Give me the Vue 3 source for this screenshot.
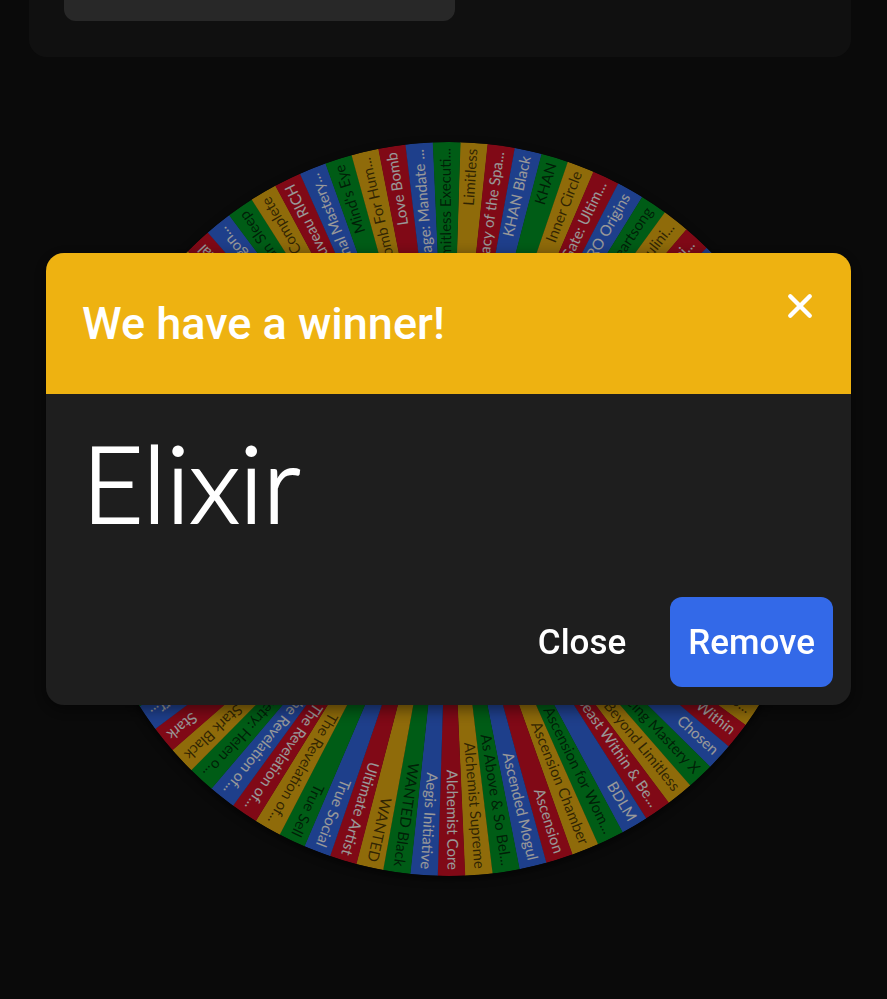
<script setup>
import { ref } from 'vue'

const open = ref(true)
const winner = ref('Elixir')

const palette = [
  { fill: '#eeb211', ink: 'dark' },
  { fill: '#d50f25', ink: 'light' },
  { fill: '#3369e8', ink: 'light' },
  { fill: '#009925', ink: 'dark' },
]

// Entry names keyed by slice number, clockwise from the top of the wheel.
const names = {
  0: 'Limitless',
  1: 'Legacy of the Spa...',
  2: 'KHAN Black',
  3: 'KHAN',
  4: 'Inner Circle',
  5: 'Gate: Ultim...',
  6: 'HERO Origins',
  7: 'Heartsong',
  8: 'Masculini...',
  9: 'Femini...',
  28: 'Co...',
  29: 'Beast Within',
  30: 'Chosen',
  31: 'Being Mastery X',
  32: 'Beyond Limitless',
  33: 'Beast Within & Be...',
  34: 'BDLM',
  35: 'Ascension for Wom...',
  36: 'Ascension Chamber',
  37: 'Ascension',
  38: 'Ascended Mogul',
  39: 'As Above & So Bel...',
  40: 'Alchemist Supreme',
  41: 'Alchemist Core',
  42: 'Aegis Initiative',
  43: 'WANTED Black',
  44: 'WANTED',
  45: 'Ultimate Artist',
  46: 'True Social',
  47: 'True Sell',
  48: 'The Revelation of...',
  49: 'The Revelation of...',
  50: 'The Revelation of...',
  51: 'Symmetry: Helen o...',
  52: 'Stark Black',
  53: 'Stark',
  54: 'Starr...',
  73: 'Primal',
  74: 'Paragon...',
  75: 'Ocean Sleep',
  76: 'Omega Complete',
  77: 'Nouveau RICH',
  78: 'Nonlethal Mastery...',
  79: "Mind's Eye",
  80: 'Love Bomb For Hum...',
  81: 'Love Bomb',
  82: 'Lineage: Mandate ...',
  83: 'Limitless Executi...',
}

const COUNT = 84
const STEP = 360 / COUNT
const OFFSET = 1.75
const R = 367

function rim(deg) {
  const a = (deg * Math.PI) / 180
  return `${(R * Math.sin(a)).toFixed(2)} ${(-R * Math.cos(a)).toFixed(2)}`
}

const slices = Array.from({ length: COUNT }, (_, k) => {
  const start = OFFSET + k * STEP
  return {
    k,
    name: names[k] || '',
    path: `M0 0L${rim(start)}A${R} ${R} 0 0 1 ${rim(start + STEP + 0.05)}Z`,
    turn: `rotate(${(start + STEP / 2 - 90).toFixed(3)})`,
    ...palette[k % 4],
  }
})
const labelled = slices.filter((s) => s.name)
</script>

<template>
  <main class="page">
    <section class="panel"><div class="field"></div></section>
    <section class="wheel-area">
      <svg class="wheel" viewBox="-367 -367 734 734" role="img" aria-label="Prize wheel">
        <path v-for="s in slices" :key="s.k" :d="s.path" :fill="s.fill" />
        <text
          v-for="s in labelled"
          :key="'t' + s.k"
          class="label"
          :class="s.ink"
          :transform="s.turn"
          x="361"
          y="4"
        >{{ s.name }}</text>
      </svg>
    </section>

    <div v-if="open" class="backdrop">
      <div class="dialog" role="dialog" aria-labelledby="dialog-title">
        <header class="head">
          <h1 id="dialog-title" class="title">We have a winner!</h1>
          <button class="dismiss" type="button" aria-label="Dismiss" @click="open = false">
            <svg viewBox="0 0 24 24" width="26" height="26">
              <path d="M3 3L21 21M21 3L3 21" />
            </svg>
          </button>
        </header>
        <p class="winner">{{ winner }}</p>
        <footer class="actions">
          <button class="btn" type="button" @click="open = false">Close</button>
          <button class="btn primary" type="button" @click="open = false">Remove</button>
        </footer>
      </div>
    </div>
  </main>
</template>

<style>
body {
  background: #111;
}
</style>

<style scoped>
.page {
  box-sizing: border-box;
  min-height: 100vh;
  background: #111;
  font-family: Roboto, "Liberation Sans", sans-serif;
}
.panel {
  margin: 0 36px 0 29px;
  padding: 0 35px 36px;
  border-radius: 0 0 18px 18px;
  background: #1c1c1c;
}
.field {
  width: 52%;
  height: 21px;
  border-radius: 0 0 12px 12px;
  background: #444;
}
.wheel-area {
  display: flex;
  justify-content: center;
  padding: 85px 36px 48px 46px;
}
.wheel {
  width: 100%;
  max-width: 734px;
  border-radius: 50%;
  box-shadow: 0 3px 8px rgba(0, 0, 0, 0.6);
}
.label {
  font-family: Lato, "Open Sans", sans-serif;
  font-size: 15px;
  text-anchor: end;
}
.dark {
  fill: rgba(0, 0, 0, 0.66);
}
.light {
  fill: #fff;
}
.backdrop {
  position: fixed;
  inset: 0;
  box-sizing: border-box;
  display: flex;
  align-items: center;
  padding: 0 36px 41px 46px;
  background: rgba(0, 0, 0, 0.4);
}
.dialog {
  width: 100%;
  overflow: hidden;
  border-radius: 18px;
  background: #1e1e1e;
  color: #fff;
  box-shadow: 0 4px 16px rgba(0, 0, 0, 0.5);
}
.head {
  display: flex;
  align-items: flex-start;
  justify-content: space-between;
  padding: 36px;
  padding-bottom: 35px;
  background: #eeb211;
}
.title {
  margin: 0;
  font-size: 45px;
  font-weight: 500;
  line-height: 70px;
}
.dismiss {
  display: flex;
  margin: 0;
  padding: 4px 2px;
  border: 0;
  background: none;
}
.dismiss path {
  fill: none;
  stroke: #fff;
  stroke-width: 4;
  stroke-linecap: round;
}
.winner {
  margin: 0;
  padding: 27px 36px 36px;
  font-family: Lato, "Open Sans", sans-serif;
  font-size: 106px;
  font-weight: 300;
  line-height: 122px;
  -webkit-text-stroke: 2px #fff;
}
.actions {
  display: flex;
  justify-content: flex-end;
  gap: 26px;
  padding: 18px;
}
.btn {
  height: 90px;
  padding: 0 18px;
  border: 0;
  border-radius: 12px;
  background: none;
  color: #fff;
  font-family: inherit;
  font-size: 35px;
  font-weight: 500;
}
.primary {
  background: #3369e8;
}
</style>
